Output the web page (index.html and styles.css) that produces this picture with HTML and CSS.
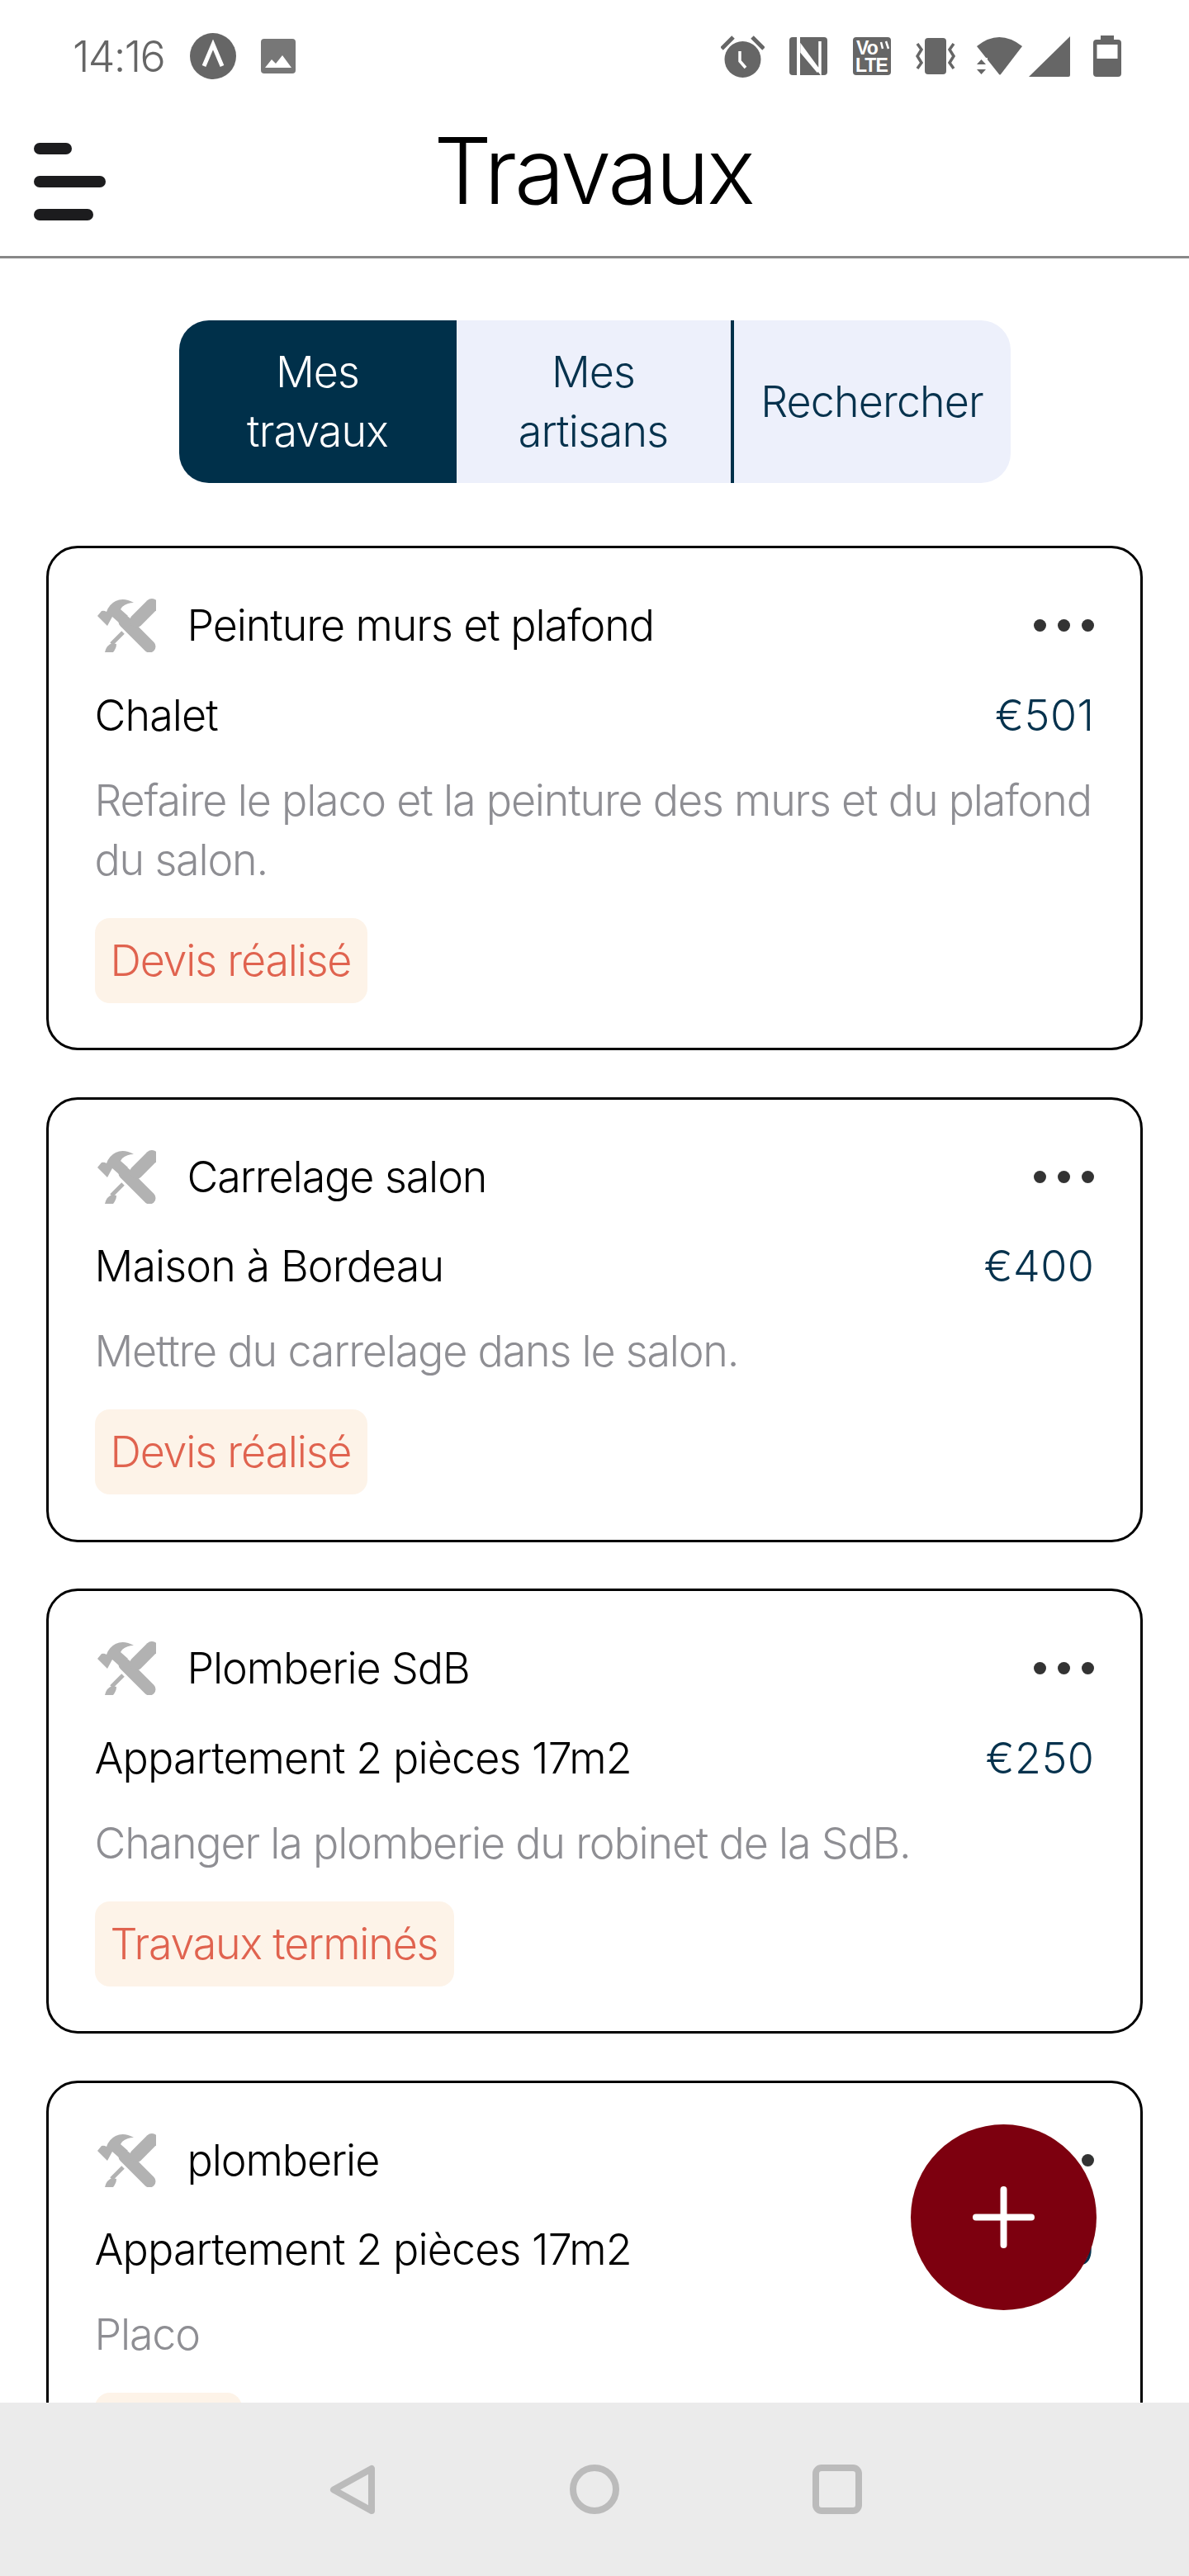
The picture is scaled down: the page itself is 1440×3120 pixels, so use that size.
FILE: index.html
```html
<!DOCTYPE html>
<html lang="fr">
<head>
<meta charset="utf-8">
<title>Travaux</title>
<link rel="stylesheet" href="styles.css">
</head>
<body>
<svg class="defs" width="0" height="0" aria-hidden="true">
  <symbol id="tools" viewBox="0 0 71 65">
    <path d="M0 21 L5 15 Q8 14 11 16 Q14 7 22 3 Q32 -2 44 5 Q36 5 30 10 L28 13 L37 21 L27 30 L18 22 L12 33 Z" fill="#b2b2b2"/>
    <path d="M33 28 L63 58" stroke="#b2b2b2" stroke-width="15" stroke-linecap="round" fill="none"/>
    <path d="M66 8 L47 27" stroke="#b2b2b2" stroke-width="16" stroke-linecap="round" fill="none"/>
    <path d="M31 41 L17 55" stroke="#b2b2b2" stroke-width="5" fill="none"/>
    <path d="M18 54 Q11 56 9 65 L19 65 Q23 60 23 55 Z" fill="#b2b2b2"/>
  </symbol>
  <symbol id="dots" viewBox="0 0 73 15">
    <circle cx="7.5" cy="7.5" r="7.5" fill="#333"/>
    <circle cx="36.5" cy="7.5" r="7.5" fill="#333"/>
    <circle cx="65.5" cy="7.5" r="7.5" fill="#333"/>
  </symbol>
</svg>
<div class="app">
  <div class="status">
    <div class="status-left">
      <span class="time">14:16</span>
      <svg class="ic-a" width="56" height="56" viewBox="0 0 56 56"><circle cx="28" cy="28" r="28" fill="#666"/><path d="M17 40 L28 14 L39 40" stroke="#fff" stroke-width="5" fill="none"/></svg>
      <svg class="ic-img" width="42" height="42" viewBox="0 0 42 42"><rect width="42" height="42" rx="4" fill="#777"/><path d="M5 35 L13 25 L18 30 L26 20 L37 35 Z" fill="#fff"/></svg>
    </div>
    <div class="status-right">
      <svg width="53" height="52" viewBox="0 0 53 52"><circle cx="26.5" cy="30" r="22" fill="#666"/><path d="M1 17 L15 3 M38 3 L52 17" stroke="#666" stroke-width="5" fill="none"/><path d="M23 20 L23 32 L30 40" stroke="#fff" stroke-width="3.500" fill="none"/></svg>
      <svg class="m30" width="46" height="46" viewBox="0 0 46 46"><rect width="46" height="46" rx="4" fill="#666"/><path d="M11 0 V46" stroke="#fff" stroke-width="4"/><path d="M37 5 V42 L15 12 V18 L35 42" stroke="#fff" stroke-width="3.500" fill="none"/></svg>
      <svg class="m31" width="46" height="46" viewBox="0 0 46 46"><rect width="46" height="46" rx="4" fill="#666"/><text class="volte" x="4" y="21">Vo</text><text class="volte" x="3" y="42">LTE</text><path d="M34 6 L36 14 M40 5 L43 14" stroke="#fff" stroke-width="2.500"/></svg>
      <svg class="m30" width="49" height="44" viewBox="0 0 49 44"><rect x="11" width="26" height="44" rx="4" fill="#666"/><path d="M2 7 L7 14 L2 22 L7 30 L2 37" stroke="#666" stroke-width="3.500" fill="none"/><path d="M46 7 L41 14 L46 22 L41 30 L46 37" stroke="#666" stroke-width="3.500" fill="none"/></svg>
      <svg class="m25" width="55" height="46" viewBox="0 0 55 46"><path d="M0 11 Q27 -11 55 11 L29 45 Q28 46 27 45 Z" fill="#666"/><path d="M0 25 H13 V46 H0 Z" fill="#fff"/><path d="M0 33 L5.500 27 L11 33 Z M0 39 L11 39 L5.500 45 Z" fill="#666"/></svg>
      <svg class="m8" width="50" height="49" viewBox="0 0 50 49"><path d="M50 0 V47 Q50 49 48 49 H0 Z" fill="#666"/></svg>
      <svg class="m28" width="34" height="50" viewBox="0 0 34 50"><path d="M9 0 H25 V5 H30 Q34 5 34 9 V46 Q34 50 30 50 H4 Q0 50 0 46 V9 Q0 5 4 5 H9 Z" fill="#666"/><rect x="4.500" y="11" width="25" height="17" fill="#fff"/></svg>
    </div>
  </div>
  <header class="topbar">
    <div class="menu"><span class="bar bar-s"></span><span class="bar bar-l"></span><span class="bar bar-m"></span></div>
    <h1 class="title">Travaux</h1>
  </header>
  <nav class="tabs">
    <div class="tab tab-on">Mes<br>travaux</div>
    <div class="tab tab-mid">Mes<br>artisans</div>
    <div class="tab tab-last">Rechercher</div>
  </nav>
  <main class="list">
    <article class="card">
      <div class="row-head"><svg class="tools" width="71" height="65"><use href="#tools"/></svg><span class="job">Peinture murs et plafond</span><svg class="dots" width="73" height="15"><use href="#dots"/></svg></div>
      <div class="row-place"><span>Chalet</span><span class="price">€501</span></div>
      <p class="desc">Refaire le placo et la peinture des murs et du plafond du salon.</p>
      <span class="badge">Devis réalisé</span>
    </article>
    <article class="card">
      <div class="row-head"><svg class="tools" width="71" height="65"><use href="#tools"/></svg><span class="job">Carrelage salon</span><svg class="dots" width="73" height="15"><use href="#dots"/></svg></div>
      <div class="row-place"><span>Maison à Bordeau</span><span class="price">€400</span></div>
      <p class="desc">Mettre du carrelage dans le salon.</p>
      <span class="badge">Devis réalisé</span>
    </article>
    <article class="card">
      <div class="row-head"><svg class="tools" width="71" height="65"><use href="#tools"/></svg><span class="job">Plomberie SdB</span><svg class="dots" width="73" height="15"><use href="#dots"/></svg></div>
      <div class="row-place"><span>Appartement 2 pièces 17m2</span><span class="price">€250</span></div>
      <p class="desc">Changer la plomberie du robinet de la SdB.</p>
      <span class="badge">Travaux terminés</span>
    </article>
    <article class="card">
      <div class="row-head"><svg class="tools" width="71" height="65"><use href="#tools"/></svg><span class="job">plomberie</span><svg class="dots" width="73" height="15"><use href="#dots"/></svg></div>
      <div class="row-place"><span>Appartement 2 pièces 17m2</span><span class="price">€150</span></div>
      <p class="desc">Placo</p>
      <span class="badge">Validé</span>
    </article>
    <button class="fab" aria-label="Ajouter"><svg width="75" height="75" viewBox="0 0 75 75"><path d="M37.500 4 V71 M4 37.500 H71" stroke="#fff" stroke-width="8" stroke-linecap="round"/></svg></button>
  </main>
  <footer class="navbar">
    <svg width="56" height="61" viewBox="0 0 56 61"><path d="M51 5 V56 L5 30.500 Z" fill="none" stroke="#bbb" stroke-width="8" stroke-linejoin="round"/></svg>
    <svg class="nav-mid" width="60" height="60" viewBox="0 0 60 60"><circle cx="30" cy="30" r="26" fill="none" stroke="#bbb" stroke-width="8"/></svg>
    <svg class="nav-last" width="60" height="60" viewBox="0 0 60 60"><rect x="4" y="4" width="52" height="52" rx="7" fill="none" stroke="#bbb" stroke-width="8"/></svg>
  </footer>
</div>
</body>
</html>
```
FILE: styles.css
```css
* { box-sizing: border-box; }
html, body { margin: 0; padding: 0; }
body { background: #fff; font-family: Inter, "Liberation Sans", Arial, sans-serif; font-weight: 300; letter-spacing: -0.900px; color: #000; }
.defs { position: absolute; }
.app { width: 1440px; height: 3120px; display: flex; flex-direction: column; overflow: hidden; }

.status { height: 136px; flex: none; display: flex; justify-content: space-between; align-items: center; padding: 0 82px 0 88px; }
.status-left, .status-right { display: flex; align-items: center; }
.time { font-size: 52px; letter-spacing: -1.700px; color: #666; width: 142px; }
.ic-img { margin-left: 30px; }
.m8 { margin-left: 8px; }
.m25 { margin-left: 25px; }
.m28 { margin-left: 28px; }
.m30 { margin-left: 30px; }
.m31 { margin-left: 31px; }
.volte { font: bold 23px "Liberation Sans", sans-serif; letter-spacing: -1px; fill: #fff; }

.topbar { height: 177px; flex: none; display: flex; align-items: center; justify-content: center; position: relative; border-bottom: 3px solid #888; }
.menu { position: absolute; left: 41px; top: 37px; width: 87px; display: flex; flex-direction: column; gap: 26px; }
.bar { display: block; height: 14px; border-radius: 7px; background: #1c1c1e; }
.bar-s { width: 46px; }
.bar-l { width: 87px; }
.bar-m { width: 72px; }
.title { margin: 0 3px 32px 0; font-size: 111px; line-height: 130px; font-weight: 300; letter-spacing: -3.300px; }

.tabs { margin: 75px auto 0; width: 1007px; height: 197px; flex: none; display: flex; border-radius: 36px; overflow: hidden; background: #edf0fb; }
.tab { display: flex; align-items: center; justify-content: center; text-align: center; font-size: 52px; line-height: 72px; color: #06324d; width: 336px; }
.tab-on { background: #00304a; color: #fff; }
.tab-mid { border-right: 4px solid #00304a; }
.tab-last { flex: 1; }

.list { position: relative; flex: 1; min-height: 0; overflow: hidden; margin-top: 76px; padding: 0 56px; display: flex; flex-direction: column; gap: 56.500px; }
.card { flex: none; border: 3px solid #000; border-radius: 38px; padding: 57.500px 55.500px 54.500px; }
.row-head { height: 72px; display: flex; align-items: center; font-size: 52px; }
.tools { flex: none; margin-left: 3px; }
.job { margin-left: 38px; flex: 1; letter-spacing: -1.100px; }
.dots { flex: none; margin-right: 1px; }
.row-place { margin-top: 37px; display: flex; justify-content: space-between; font-size: 52px; line-height: 72px; }
.price { color: #06324d; letter-spacing: 0.500px; }
.desc { margin: 31px 0 34px; font-size: 52px; line-height: 72px; letter-spacing: -1.200px; color: #8e8e93; }
.badge { display: inline-block; padding: 16px 20px 15px 19px; font-size: 52px; line-height: 72px; letter-spacing: -1.200px; border-radius: 18px; background: #fdf3e8; color: #e0634f; }

.fab { position: absolute; right: 112px; top: 1912px; width: 225px; height: 225px; border: none; border-radius: 50%; background: #7d000f; display: flex; align-items: center; justify-content: center; padding: 0; }

.navbar { height: 210px; flex: none; background: #ebebeb; display: flex; align-items: center; padding-left: 399px; }
.nav-mid { margin-left: 235px; }
.nav-last { margin-left: 234px; }
```
